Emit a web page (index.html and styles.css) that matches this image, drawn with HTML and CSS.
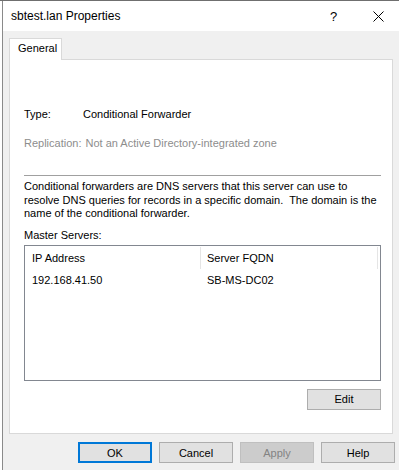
FILE: index.html
```html
<!DOCTYPE html>
<html lang="en">
<head>
    <meta charset="UTF-8">
    <title>sbtest.lan Properties</title>
    <link rel="stylesheet" href="styles.css">
</head>
<body>
    <div class="window">
        <!-- title bar -->
        <div class="titlebar">
            <span class="title">sbtest.lan Properties</span>
            <span class="help-btn">?</span>
            <span class="close-btn">
                <svg width="11" height="11" viewBox="0 0 11 11">
                    <path d="M0.5 0.5 L10.5 10.5 M10.5 0.5 L0.5 10.5" stroke="#000" stroke-width="1" fill="none"/>
                </svg>
            </span>
        </div>

        <div class="client">
            <!-- tabs -->
            <div class="tabs">
                <div class="tab active">General</div>
            </div>

            <div class="panel">
                <div class="field-row type-row">
                    <span class="field-label">Type:</span>
                    <span>Conditional Forwarder</span>
                </div>
                <div class="field-row disabled">
                    <span class="field-label">Replication:</span>
                    <span>Not an Active Directory-integrated zone</span>
                </div>

                <div class="separator"></div>

                <p class="description">Conditional forwarders are DNS servers that this server can use to resolve DNS queries for records in a specific domain.&nbsp; The domain is the name of the conditional forwarder.</p>

                <div class="list-label">Master Servers:</div>
                <div class="listview">
                    <div class="list-header">
                        <div class="col col-ip">IP Address</div>
                        <div class="col col-fqdn">Server FQDN</div>
                    </div>
                    <div class="list-row">
                        <div class="col col-ip">192.168.41.50</div>
                        <div class="col col-fqdn">SB-MS-DC02</div>
                    </div>
                </div>

                <div class="panel-actions">
                    <button class="btn">Edit</button>
                </div>
            </div>

            <!-- dialog buttons -->
            <div class="dialog-buttons">
                <button class="btn default">OK</button>
                <button class="btn">Cancel</button>
                <button class="btn" disabled>Apply</button>
                <button class="btn">Help</button>
            </div>
        </div>
    </div>
</body>
</html>
```

FILE: styles.css
```css
* {
    margin: 0;
    padding: 0;
    box-sizing: border-box;
}

body {
    font-family: "Liberation Sans", Arial, sans-serif;
    font-size: 11px;
    color: #000;
    background-color: #fff;
    border-top: 1px solid #6f6f6f;
    width: 399px;
    height: 470px;
    overflow: hidden;
}

.window {
    margin-left: 2px;
    border-left: 1px solid #8a8a8a;
    height: 469px;
}

/* title bar */
.titlebar {
    height: 30px;
    display: flex;
    align-items: center;
    padding-left: 8px;
    background-color: #fff;
}

.title {
    font-size: 12px;
    flex: 1;
}

.help-btn {
    font-size: 13px;
    width: 12px;
    margin-right: 31px;
}

.close-btn {
    width: 11px;
    height: 11px;
    margin-right: 15px;
    display: flex;
}

/* client area */
.client {
    background-color: #f0f0f0;
    height: 439px;
    padding: 7px 0 0 6px;
}

.tabs {
    display: flex;
    height: 21px;
    position: relative;
    z-index: 1;
}

.tab {
    width: 53px;
    height: 22px;
    background-color: #fff;
    border: 1px solid #d9d9d9;
    border-bottom: none;
    padding: 3px 0 0 8px;
}

.panel {
    width: 384px;
    height: 375px;
    background-color: #fff;
    border: 1px solid #d9d9d9;
    padding: 0 11px 0 14px;
}

.field-row {
    display: flex;
    line-height: 14px;
}

.type-row {
    margin-top: 47px;
}

.field-row.disabled {
    color: #8d8d8d;
    margin-top: 15px;
}

.field-label {
    width: 59px;
}

.field-row.disabled .field-label {
    width: auto;
    margin-right: 4px;
}

.separator {
    height: 1px;
    background-color: #a0a0a0;
    margin-top: 25px;
}

.description {
    margin-top: 4px;
    line-height: 13.5px;
}

.list-label {
    margin-top: 7px;
    line-height: 14px;
}

.listview {
    margin-top: 3px;
    height: 136px;
    border: 1px solid #828790;
    padding: 1px;
}

.list-header {
    display: flex;
    height: 22px;
    align-items: center;
}

.list-header .col {
    height: 22px;
    line-height: 22px;
    border-right: 1px solid #e5e5e5;
}

.col {
    padding-left: 6px;
}

.col-ip {
    width: 175px;
}

.col-fqdn {
    width: 177px;
}

.list-row {
    display: flex;
    height: 18px;
    line-height: 18px;
    margin-top: 2px;
}

.panel-actions {
    display: flex;
    justify-content: flex-end;
    margin-top: 8px;
}

/* buttons */
.btn {
    width: 74px;
    height: 21px;
    font-family: inherit;
    font-size: 11px;
    color: #000;
    background-color: #e1e1e1;
    border: 1px solid #adadad;
}

.btn.default {
    border: 2px solid #0078d7;
}

.btn:disabled {
    background-color: #cccccc;
    border-color: #bfbfbf;
    color: #838383;
}

.dialog-buttons {
    display: flex;
    gap: 7px;
    padding-left: 69px;
    margin-top: 8px;
}
```
